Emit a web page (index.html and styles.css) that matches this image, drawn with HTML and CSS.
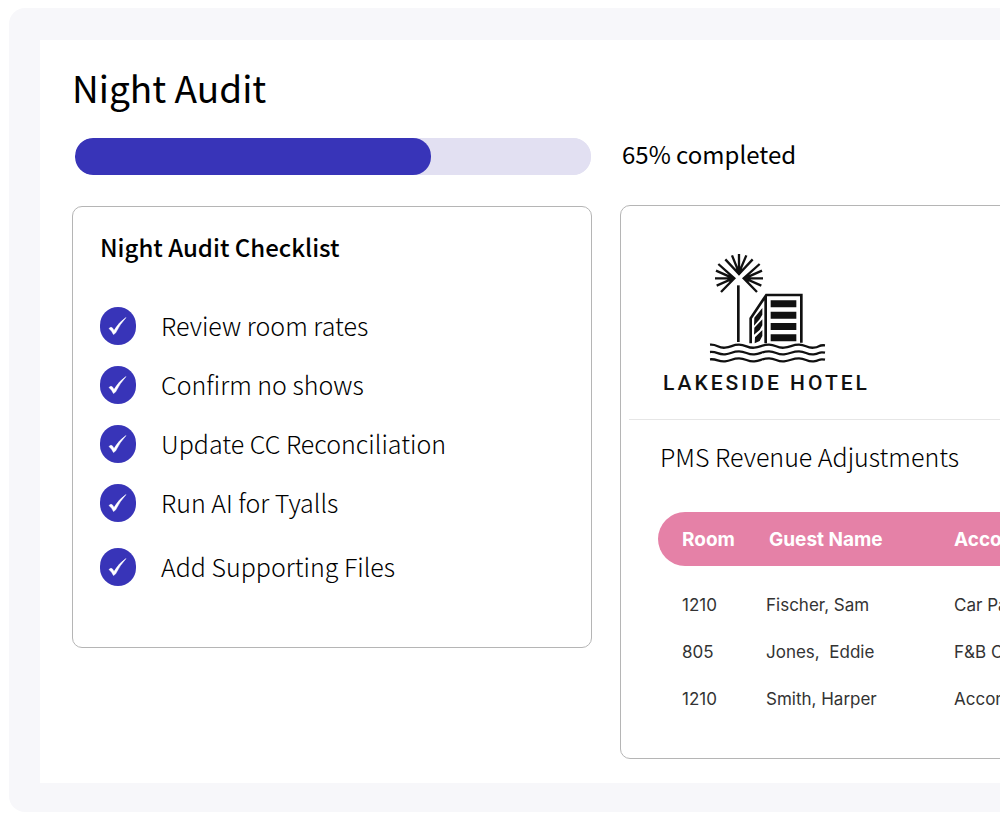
FILE: index.html
```html
<!DOCTYPE html>
<html lang="en">
<head>
    <meta charset="UTF-8">
    <meta name="viewport" content="width=device-width, initial-scale=1.0">
    <title>Night Audit</title>
    <link rel="stylesheet" href="styles.css">
</head>
<body>
    <div class="frame">
        <main class="page">
            <h1>Night Audit</h1>

            <div class="progress-row">
                <progress id="audit-progress" class="progress" value="69" max="100"></progress>
                <label for="audit-progress">65% completed</label>
            </div>

            <div class="columns">
                <section class="card checklist">
                    <h2>Night Audit Checklist</h2>
                    <ul>
                        <li>
                            <label>
                                <span class="tick"><input type="checkbox" checked><svg viewBox="0 0 36 38"><use href="#tick-mark"/></svg></span>
                                Review room rates
                            </label>
                        </li>
                        <li>
                            <label>
                                <span class="tick"><input type="checkbox" checked><svg viewBox="0 0 36 38"><use href="#tick-mark"/></svg></span>
                                Confirm no shows
                            </label>
                        </li>
                        <li>
                            <label>
                                <span class="tick"><input type="checkbox" checked><svg viewBox="0 0 36 38"><use href="#tick-mark"/></svg></span>
                                Update CC Reconciliation
                            </label>
                        </li>
                        <li>
                            <label>
                                <span class="tick"><input type="checkbox" checked><svg viewBox="0 0 36 38"><use href="#tick-mark"/></svg></span>
                                Run AI for Tyalls
                            </label>
                        </li>
                        <li class="files">
                            <label>
                                <span class="tick"><input type="checkbox" checked><svg viewBox="0 0 36 38"><use href="#tick-mark"/></svg></span>
                                Add Supporting Files
                            </label>
                        </li>
                    </ul>
                </section>

                <section class="card report">
                    <div class="brand">
                        <svg class="logo" viewBox="0 0 405 375" fill="none" stroke="#111" stroke-width="7">
                            <!-- palm -->
                            <path d="M115 124V294" stroke-width="8"/>
                            <path d="M76 46L117 90L158 46M96 34L117 86L139 34M117 90V30"/>
                            <path d="M55 60L103 103L63 144M48 80L100 103L50 125M103 103H45"/>
                            <path d="M179 60L131 103L171 144M186 80L134 103L184 125M131 103H189"/>
                            <path d="M117 94L103 74H131ZM105 103L88 91V115ZM129 103L146 91V115Z" fill="#111" stroke="none"/>
                            <!-- building -->
                            <path d="M152 298V223L199 153H304V296M197 156V298" stroke-width="8"/>
                            <path d="M212 169H289V190H212ZM212 203H289V224H212ZM212 237H289V258H212ZM212 271H289V292H212Z" fill="#111" stroke="none"/>
                            <path d="M163 221L187 192V212L179 226L162 245ZM163 251L187 226V244L179 258L162 272ZM165 280L187 258V276L179 291L164 298Z" fill="#111" stroke="none"/>
                            <!-- water -->
                            <path d="M30 302C52 300 54 313 75 311S96 302 117 302S143 313 163 311S186 302 207 302S231 313 252 311S276 302 297 302S320 313 341 311S353 302 375 304"/>
                            <path d="M30 324C52 322 54 333 75 331S96 322 117 322S143 333 163 331S186 322 207 322S231 333 252 331S276 322 297 322S320 333 341 331S353 322 375 326"/>
                            <path d="M30 346C52 344 54 354 75 352S96 343 117 343S143 354 163 352S186 343 207 343S231 354 252 352S276 343 297 343S320 354 341 352S353 343 375 347"/>
                        </svg>
                        <p class="brand-name">LAKESIDE HOTEL</p>
                    </div>

                    <h3>PMS Revenue Adjustments</h3>

                    <table>
                        <thead>
                            <tr>
                                <th class="room">Room</th>
                                <th class="guest">Guest Name</th>
                                <th>Account</th>
                            </tr>
                        </thead>
                        <tbody>
                            <tr>
                                <td>1210</td>
                                <td>Fischer, Sam</td>
                                <td>Car Parking</td>
                            </tr>
                            <tr>
                                <td>805</td>
                                <td>Jones,&nbsp; Eddie</td>
                                <td>F&amp;B Outlet</td>
                            </tr>
                            <tr>
                                <td>1210</td>
                                <td>Smith, Harper</td>
                                <td>Accommodation</td>
                            </tr>
                        </tbody>
                    </table>
                </section>
            </div>
        </main>
    </div>

    <svg class="symbols" aria-hidden="true">
        <symbol id="tick-mark" viewBox="0 0 36 38">
            <path d="M9 21.5Q11 19.5 12.5 21L14 23.5Q19 15 26 10.5Q20 17 15.5 26L13.5 27.5Q12 24 9 21.5Z" fill="#fff" stroke="#fff" stroke-width="0.5"/>
        </symbol>
    </svg>
</body>
</html>
```

FILE: styles.css
```css
* {
    box-sizing: border-box;
}

body {
    margin: 0;
    background: #fff;
    color: #000;
    font-family: "Noto Sans CJK SC", "Noto Sans", sans-serif;
    font-size: 25px;
    font-weight: 300;
    line-height: 36px;
    overflow-x: hidden;
}

h1, h2, h3, p, ul {
    margin: 0;
    padding: 0;
}

.symbols {
    display: none;
}

/* The report runs on past narrow windows */
.frame {
    min-width: 1240px;
    margin: 8px 0 9px 9px;
    padding: 32px 31px 29px;
    background: #f7f7fa;
    border-radius: 16px;
}

.page {
    padding: 20px 32px 24px;
    background: #fff;
}

h1 {
    font-size: 37px;
    font-weight: 400;
    line-height: 54px;
}

/* Progress */
.progress-row {
    display: flex;
    align-items: flex-start;
    gap: 31px;
    margin-top: 24px;
    padding-left: 3px;
    font-size: 24px;
    font-weight: 400;
    line-height: 32px;
}

.progress {
    appearance: none;
    width: 516px;
    height: 37px;
    border: none;
    border-radius: 18px;
    background: #e2e0f2;
    overflow: hidden;
}

.progress::-webkit-progress-bar {
    background: #e2e0f2;
    border-radius: 18px;
}

.progress::-webkit-progress-value {
    background: #3834b8;
    border-radius: 18px;
}

.columns {
    display: flex;
    align-items: flex-start;
    gap: 28px;
    margin-top: 30px;
}

.card {
    border: 1px solid #b5b5b5;
    border-radius: 10px;
    background: #fff;
}

/* Checklist */
.checklist {
    flex: 0 0 520px;
    margin-top: 1px;
    padding: 22px 27px 61px;
}

.checklist h2 {
    font-size: 24px;
    font-weight: 500;
    line-height: 36px;
}

.checklist ul {
    display: grid;
    gap: 21px;
    margin-top: 42px;
    list-style: none;
}

.checklist label {
    display: flex;
    align-items: flex-start;
    gap: 25px;
}

.checklist .files {
    padding-top: 5px;
}

.tick {
    position: relative;
    width: 36px;
    height: 38px;
}

.tick input {
    appearance: none;
    display: block;
    width: 36px;
    height: 38px;
    margin: 0;
    border-radius: 18px;
    background: #ddd;
}

.tick input:checked {
    background: #3834b8;
}

.tick svg {
    position: absolute;
    inset: 0;
    width: 100%;
    height: 100%;
    pointer-events: none;
}

/* Report */
.report {
    flex: 1;
    padding: 38px 0 35px 8px;
}

.brand {
    padding: 0 0 22px 34px;
    border-bottom: 1px solid #e6e6e6;
}

.logo {
    display: block;
    width: 135px;
    height: 125px;
    margin-left: 37px;
}

.brand-name {
    color: #111;
    font-family: Roboto, sans-serif;
    font-size: 21px;
    font-weight: 500;
    letter-spacing: 3px;
    line-height: 28px;
}

.report h3 {
    padding: 18px 0 0 31px;
    font-size: 25px;
    font-weight: 300;
    line-height: 36px;
}

.report table {
    width: calc(100% - 29px);
    margin: 38px 0 0 29px;
    border-collapse: collapse;
    color: #333;
    font-family: Inter, sans-serif;
    font-size: 17px;
    font-weight: 400;
    line-height: 27px;
    text-align: left;
}

.report th {
    height: 54px;
    padding: 0;
    background: #e581a7;
    color: #fff;
    font-size: 19px;
    font-weight: 700;
}

.report th:first-child {
    padding-left: 24px;
    border-radius: 27px 0 0 27px;
}

.report .room {
    width: 108px;
}

.report .guest {
    width: 188px;
    padding-left: 3px;
}

.report td {
    padding: 10px 0;
}

.report td:first-child {
    padding-left: 24px;
}

.report tbody tr:first-child td {
    padding-top: 26px;
}
```
